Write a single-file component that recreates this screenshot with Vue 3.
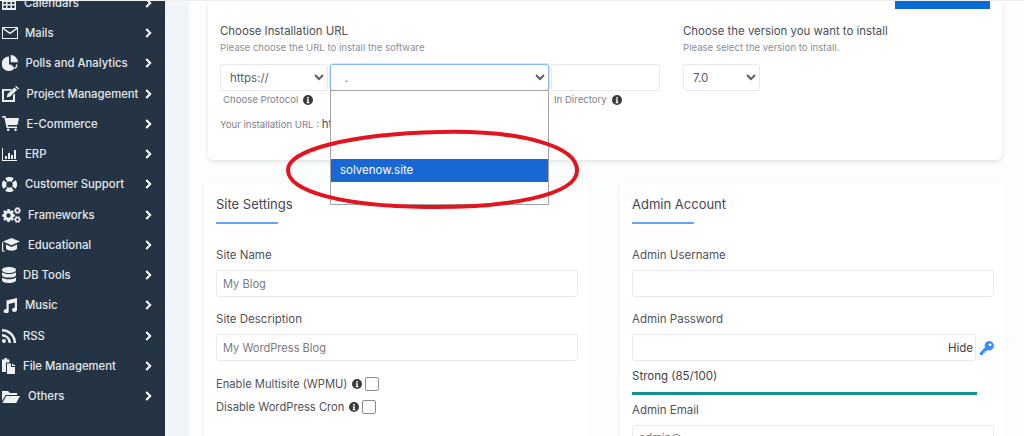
<script setup>
const gear = (cx, cy, r, hole, n) => {
  const pts = [];
  const step = (Math.PI * 2) / n;
  for (let i = 0; i < n; i++) {
    const a = i * step;
    [[-0.3, r * 0.76], [-0.17, r], [0.17, r], [0.3, r * 0.76]].forEach(([o, d]) => {
      const t = a + o * step * 1.3;
      pts.push((cx + Math.cos(t) * d).toFixed(2) + ' ' + (cy + Math.sin(t) * d).toFixed(2));
    });
  }
  return `M${pts.join('L')}Z M${cx - hole} ${cy}a${hole} ${hole} 0 1 0 ${hole * 2} 0a${hole} ${hole} 0 1 0 ${-hole * 2} 0Z`;
};

const menu = [
  { name: 'Calendars', w: 14, h: 14, gap: 8, d: 'M0 2H3V0H4.5V2H9.5V0H11V2H14V14H0ZM1.5 6V8H4V6ZM5.5 6V8H8.5V6ZM10 6V8H12.5V6ZM1.5 9.5V12H4V9.5ZM5.5 9.5V12H8.5V9.5ZM10 9.5V12H12.5V9.5Z' },
  { name: 'Mails', w: 16, h: 12, gap: 7, d: 'M0 0H16V12H0ZM1.8 1L8 5.6L14.2 1ZM1 2.2V11H15V2.2L8 7.2Z' },
  { name: 'Polls and Analytics', w: 16, h: 16, gap: 7.5, d: 'M7 1.5A7.3 7.3 0 1 0 14.2 9.5H7ZM8.7 0A7.3 7.3 0 0 1 16 7.3H8.7ZM9 9.5H15.6A7 7 0 0 1 13.7 14Z' },
  { name: 'Project Management', w: 17, h: 16, gap: 7.5, d: 'M0 3H10L8.4 4.8H2V14H11V9.2L13 7.2V16H0ZM4.6 11.4L5.6 8L12.4 1.4L15 4L8.2 10.6ZM13.4 .4C13.9 0 14.4 0 14.8 .4L16.6 2.1C17 2.6 17 3.1 16.6 3.5L15.8 3.2L13.2 .8Z' },
  { name: 'E-Commerce', w: 17, h: 15, gap: 7.5, d: 'M0 0H3.6L4 2H17L15.5 9H5.6L5.9 10.5H15V12H4.6L2.4 1.5H0ZM6.2 12.4A1.3 1.3 0 1 1 6.1 15A1.3 1.3 0 0 1 6.2 12.4ZM13.6 12.4A1.3 1.3 0 1 1 13.5 15A1.3 1.3 0 0 1 13.6 12.4Z' },
  { name: 'ERP', w: 15, h: 13, gap: 8, d: 'M0 0H1V12H15V13H0ZM3 8H5V11H3ZM6 5H8V11H6ZM9 7H11V11H9ZM12 2H14V11H12Z' },
  { name: 'Customer Support', w: 15, h: 15, gap: 8, d: 'M3.2 1.36A7.5 7.5 0 0 1 11.8 1.36L9.34 4.88A3.2 3.2 0 0 0 5.66 4.88ZM13.64 3.2A7.5 7.5 0 0 1 13.64 11.8L10.12 9.34A3.2 3.2 0 0 0 10.12 5.66ZM11.8 13.64A7.5 7.5 0 0 1 3.2 13.64L5.66 10.12A3.2 3.2 0 0 0 9.34 10.12ZM1.36 11.8A7.5 7.5 0 0 1 1.36 3.2L4.88 5.66A3.2 3.2 0 0 0 4.88 9.34Z' },
  { name: 'Frameworks', w: 19, h: 16, gap: 7, d: gear(6.5, 8.5, 6.5, 2.2, 8) + gear(15.5, 3.5, 3.5, 1.2, 6) + gear(15.5, 12.5, 3.5, 1.2, 6) },
  { name: 'Educational', w: 18, h: 14, gap: 8, d: 'M9.5 0L18 3.6L9.5 7.2L1 3.6ZM4 6.6L9.5 9L15 6.6V10.8C13 13.4 6 13.4 4 10.8ZM0 4.2H1.2V12.6H2.6V13.6H0Z' },
  { name: 'DB Tools', w: 14, h: 16, gap: 7, d: 'M0 3C0 1 3 0 7 0S14 1 14 3S11 6 7 6S0 5 0 3ZM0 5.2C2 7.6 12 7.6 14 5.2V8C14 9.6 11 10.6 7 10.6S0 9.6 0 8ZM0 10.4C2 12.8 12 12.8 14 10.4V13C14 15 11 16 7 16S0 15 0 13Z' },
  { name: 'Music', w: 15, h: 15, gap: 8, d: 'M4.5 2.5L15 0V11.8A2.5 2.1 0 1 1 12.8 9.7V4.6L6.7 6V13A2.5 2.1 0 1 1 4.5 11Z' },
  { name: 'RSS', w: 14, h: 14, gap: 7, d: 'M2 10A2 2 0 1 1 1.9 14A2 2 0 0 1 2 10ZM0 5A9 9 0 0 1 9 14H6.6A6.6 6.6 0 0 0 0 7.4ZM0 0A14 14 0 0 1 14 14H11.6A11.6 11.6 0 0 0 0 2.4Z' },
  { name: 'File Management', w: 14, h: 16, gap: 7, d: 'M0 1.5H2.4V0H5V1.5H7.4V4.4H4V14H0ZM5 5.4H9V9H13V16H5ZM10 5.4L14 8H10Z' },
  { name: 'Others', w: 18, h: 13, gap: 8, d: 'M0 1H6L8 3H15V5H3.6L0 11ZM4.2 6H18L14.2 13H.4Z' }
];

const domainOptions = ['', '', '', 'solvenow.site', ''];
</script>

<template>
  <div class="shell">
    <aside class="sidebar">
      <a v-for="item in menu" :key="item.name" class="menu-item">
        <svg class="menu-icon" :width="item.w" :height="item.h" :viewBox="`0 0 ${item.w} ${item.h}`" :style="{ marginRight: item.gap + 'px' }">
          <path :d="item.d" fill-rule="evenodd" />
        </svg>
        <span class="menu-label">{{ item.name }}</span>
        <svg class="chevron" width="7" height="10" viewBox="0 0 7 10">
          <path d="M1.2 1L5.2 5L1.2 9" />
        </svg>
      </a>
    </aside>

    <main class="panel">
      <section class="install-card">
        <div class="install-action"><button class="install-btn"></button></div>
        <div class="install-cols">
          <div class="url-col">
            <h4 class="block-title">Choose Installation URL</h4>
            <p class="block-sub">Please choose the URL to install the software</p>
            <div class="url-row">
              <div class="url-cell proto">
                <select class="control">
                  <option>https://</option>
                </select>
                <span class="hint">Choose Protocol
                  <svg class="info" viewBox="0 0 10 10"><circle cx="5" cy="5" r="5" /><path d="M4.2 2h1.6v1.5H4.2zM3.8 4.2h2v3h.6v1H3.6v-1h.7v-2h-.5z" /></svg>
                </span>
              </div>
              <div class="url-cell domain">
                <select class="control focused">
                  <option>.</option>
                </select>
                <div class="dropdown">
                  <div v-for="(opt, i) in domainOptions" :key="i" class="dropdown-opt" :class="{ active: opt }">{{ opt }}</div>
                </div>
              </div>
              <div class="url-cell dir">
                <input class="control" type="text" />
                <span class="hint">In Directory
                  <svg class="info" viewBox="0 0 10 10"><circle cx="5" cy="5" r="5" /><path d="M4.2 2h1.6v1.5H4.2zM3.8 4.2h2v3h.6v1H3.6v-1h.7v-2h-.5z" /></svg>
                </span>
              </div>
            </div>
            <p class="url-line">Your installation URL : <span class="url-value">https://</span></p>
          </div>
          <div class="version-col">
            <h4 class="block-title">Choose the version you want to install</h4>
            <p class="block-sub">Please select the version to install.</p>
            <select class="control version">
              <option>7.0</option>
            </select>
          </div>
        </div>
      </section>

      <div class="settings-grid">
        <section class="card">
          <h3 class="card-title">Site Settings</h3>
          <label class="field-label first">Site Name</label>
          <input class="control wide" type="text" value="My Blog" />
          <label class="field-label">Site Description</label>
          <input class="control wide" type="text" value="My WordPress Blog" />
          <div class="check-row first-check">
            <span class="check-text">Enable Multisite (WPMU)</span>
            <svg class="info" viewBox="0 0 10 10"><circle cx="5" cy="5" r="5" /><path d="M4.2 2h1.6v1.5H4.2zM3.8 4.2h2v3h.6v1H3.6v-1h.7v-2h-.5z" /></svg>
            <span class="check"></span>
          </div>
          <div class="check-row">
            <span class="check-text">Disable WordPress Cron</span>
            <svg class="info" viewBox="0 0 10 10"><circle cx="5" cy="5" r="5" /><path d="M4.2 2h1.6v1.5H4.2zM3.8 4.2h2v3h.6v1H3.6v-1h.7v-2h-.5z" /></svg>
            <span class="check"></span>
          </div>
        </section>

        <section class="card">
          <h3 class="card-title">Admin Account</h3>
          <label class="field-label first">Admin Username</label>
          <input class="control wide" type="text" />
          <label class="field-label">Admin Password</label>
          <div class="password-row">
            <div class="password-box"><span class="hide">Hide</span></div>
            <svg class="key" width="14" height="14" viewBox="0 0 14 14">
              <path fill-rule="evenodd" d="M9.3 0A4.7 4.7 0 1 1 7.6 9.1L6.4 10.3H4.8V12H3.1V13.4L2.5 14H0V11.4L5 6.4A4.7 4.7 0 0 1 9.3 0ZM10.2 2.4A1.4 1.4 0 1 0 10.1 5.2A1.4 1.4 0 0 0 10.2 2.4Z" />
            </svg>
          </div>
          <div class="strength-text">Strong (85/100)</div>
          <div class="strength-bar"></div>
          <label class="field-label email">Admin Email</label>
          <input class="control wide" type="text" value="admin@" />
        </section>
      </div>
    </main>

    <svg class="scribble" width="1024" height="436" viewBox="0 0 1024 436">
      <path d="M440 132C520 130 578 146 577 171C576 195 510 208 425 207C345 206 288 192 288 170C288 150 350 134 440 132Z" />
    </svg>
  </div>
</template>

<style scoped>
.shell {
  position: relative;
  display: flex;
  height: 436px;
  overflow: hidden;
  box-sizing: border-box;
  border-top: 1px solid #eceef0;
  background: #fff;
  font-family: Inter, "Open Sans", sans-serif;
}

.sidebar {
  width: 165px;
  flex-shrink: 0;
  margin-right: 24px;
  background: #253444;
  box-sizing: border-box;
  padding: 0 13px 0 2px;
}

.menu-item {
  display: flex;
  align-items: center;
  height: 30.27px;
  color: #e3e8ed;
  font-size: 11.3px;
  font-weight: 500;
}

.menu-item:first-child {
  margin-top: -13.4px;
}

.menu-icon {
  flex-shrink: 0;
  fill: #eef1f4;
}

.menu-label {
  white-space: nowrap;
}

.chevron {
  margin-left: auto;
  flex-shrink: 0;
  fill: none;
  stroke: #fff;
  stroke-width: 2;
}

.panel {
  width: 829px;
  flex-shrink: 0;
  background: #fcfdfd;
  box-shadow: -24px 0 0 #f1f5f9;
  color: #4b4f58;
}

.install-card {
  width: 794px;
  margin-left: 19px;
  padding: 0 12px 28px;
  box-sizing: border-box;
  height: 159px;
  background: #fff;
  border-radius: 0 0 6px 6px;
  box-shadow: 0 2px 5px rgba(0, 0, 0, 0.11);
}

.install-action {
  display: flex;
  justify-content: flex-end;
}

.install-btn {
  width: 95px;
  height: 8px;
  border: none;
  padding: 0;
  background: #0b6bd6;
}

.install-cols {
  display: flex;
  gap: 23px;
  margin-top: 13px;
}

.url-col {
  width: 440px;
  flex-shrink: 0;
}

.block-title {
  margin: 0;
  font-size: 11.4px;
  line-height: 18px;
  font-weight: 400;
  color: #4a4d55;
}

.block-sub {
  margin: 1px 0 9px;
  font-size: 9.6px;
  line-height: 14px;
  color: #8b8f98;
}

.url-row {
  display: flex;
  gap: 2px;
}

.url-cell {
  position: relative;
  display: flex;
  flex-direction: column;
}

.proto {
  width: 108px;
}

.domain {
  width: 219px;
}

.dir {
  flex: 1;
}

.control {
  display: block;
  box-sizing: border-box;
  height: 27px;
  width: 100%;
  padding: 0 5px;
  border: 1px solid #e8eaee;
  border-radius: 3px;
  background: #fff;
  font-family: inherit;
  font-size: 11.5px;
  color: #5b5f68;
  outline: none;
}

.focused {
  padding-left: 10px;
  border-color: #86b7fe;
  box-shadow: 0 0 0 1px rgba(134, 183, 254, 0.35);
}

.hint {
  display: flex;
  align-items: center;
  gap: 5px;
  margin-top: 2px;
  padding-left: 3px;
  font-size: 9.6px;
  line-height: 14px;
  color: #7d818a;
}

.info {
  width: 10px;
  height: 10px;
  flex-shrink: 0;
  fill: #3a3a3d;
}

.info path {
  fill: #fff;
}

.dropdown {
  position: absolute;
  top: 26px;
  left: 0;
  width: 100%;
  box-sizing: border-box;
  border: 1px solid #a3a3a3;
  background: #fff;
  z-index: 2;
}

.dropdown-opt {
  height: 22.7px;
  line-height: 22px;
  padding-left: 9px;
  font-size: 11.5px;
  color: #fff;
}

.dropdown-opt.active {
  background: #1967d2;
}

.url-line {
  margin: 9px 0 0;
  font-size: 9.6px;
  line-height: 16px;
  color: #7d818a;
}

.url-value {
  font-size: 11.5px;
  color: #4a4d55;
}

.version {
  width: 77px;
}

.settings-grid {
  display: grid;
  grid-template-columns: 386px 386px;
  gap: 30px;
  margin: 23px 0 0 15px;
}

.card {
  display: flex;
  flex-direction: column;
  height: 300px;
  padding: 11px 12px 0;
  box-sizing: border-box;
  background: #fff;
  border-radius: 4px;
  box-shadow: 0 0 3px rgba(0, 0, 0, 0.05);
}

.card-title {
  position: relative;
  margin: 0 0 10px;
  padding-bottom: 8px;
  font-size: 13px;
  line-height: 20px;
  font-weight: 400;
  color: #44474f;
}

.card-title::after {
  content: "";
  position: absolute;
  left: 0;
  bottom: -2px;
  width: 62px;
  height: 2px;
  background: #66a6f5;
}

.field-label {
  display: block;
  margin: 14px 0 7px;
  font-size: 11.5px;
  line-height: 16px;
  color: #4f535b;
}

.field-label.first {
  margin-top: 15px;
}

.wide {
  flex-shrink: 0;
  padding: 0 6px;
  font-size: 11.1px;
  color: #777b84;
}

.check-row {
  display: flex;
  align-items: center;
  gap: 3px;
  height: 16px;
  margin-top: 7px;
  font-size: 11.2px;
  color: #4f535b;
}

.check-text {
  margin-right: 2px;
}

.first-check {
  margin-top: 15px;
}

.check {
  width: 12px;
  height: 12px;
  border: 1px solid #8d8d8d;
  border-radius: 2px;
  background: #fff;
}

.password-row {
  display: flex;
  align-items: center;
  gap: 4px;
}

.password-box {
  display: flex;
  align-items: center;
  justify-content: flex-end;
  width: 345px;
  height: 27px;
  box-sizing: border-box;
  padding-right: 2px;
  border: 1px solid #e8eaee;
  border-radius: 3px;
}

.hide {
  font-size: 11.5px;
  color: #3f4248;
}

.key {
  fill: #3b8cf6;
}

.strength-text {
  margin-top: 7px;
  font-size: 11.5px;
  line-height: 16px;
  font-weight: 400;
  color: #3f4248;
}

.strength-bar {
  width: 345px;
  height: 2.5px;
  margin-top: 8px;
  background: #0d9488;
}

.field-label.email {
  margin-top: 7px;
}

.scribble {
  position: absolute;
  top: -1px;
  left: 0;
  z-index: 5;
  pointer-events: none;
}

.scribble path {
  fill: none;
  stroke: #e2141f;
  stroke-width: 4;
}
</style>

<style>
html,
body {
  margin: 0;
  overflow: hidden;
}
</style>
